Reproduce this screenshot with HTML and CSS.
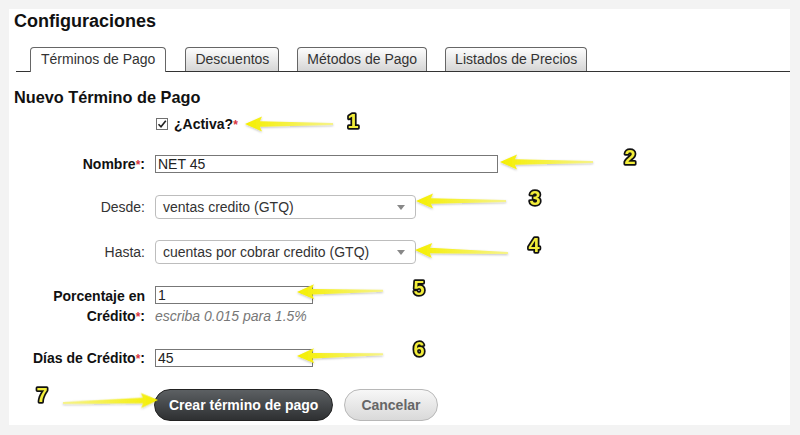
FILE: index.html
```html
<!DOCTYPE html>
<html lang="es">
<head>
    <meta charset="UTF-8">
    <title>Configuraciones</title>
    <link rel="stylesheet" href="styles.css">
</head>
<body>
    <div class="panel">
        <h1>Configuraciones</h1>
        <ul class="tabs">
            <li class="tab active">Términos de Pago</li>
            <li class="tab">Descuentos</li>
            <li class="tab">Métodos de Pago</li>
            <li class="tab">Listados de Precios</li>
        </ul>

        <h2>Nuevo Término de Pago</h2>

        <div class="row activa">
            <span></span>
            <label class="check-label">
                <span class="check"><svg width="10" height="10" viewBox="0 0 10 10"><path d="M1.5 5.2 L4 7.8 L8.8 1.8" fill="none" stroke="#222" stroke-width="1.6"/></svg></span>
                <span>¿Activa?<span class="req">*</span></span>
            </label>
        </div>

        <div class="row">
            <label class="label">Nombre<span class="req">*</span>:</label>
            <input class="field wide" type="text" value="NET 45">
        </div>

        <div class="row sel">
            <label class="label plain">Desde:</label>
            <div class="select"><span>ventas credito (GTQ)</span><span class="caret"></span></div>
        </div>

        <div class="row sel">
            <label class="label plain">Hasta:</label>
            <div class="select"><span>cuentas por cobrar credito (GTQ)</span><span class="caret"></span></div>
        </div>

        <div class="row two">
            <label class="label">Porcentaje en<br>Crédito<span class="req">*</span>:</label>
            <div>
                <input class="field short" type="text" value="1">
                <div class="hint">escriba 0.015 para 1.5%</div>
            </div>
        </div>

        <div class="row dias">
            <label class="label">Días de Crédito<span class="req">*</span>:</label>
            <input class="field short" type="text" value="45">
        </div>

        <div class="row actions">
            <span></span>
            <div class="buttons">
                <button class="btn primary">Crear término de pago</button>
                <button class="btn">Cancelar</button>
            </div>
        </div>
    </div>

    <svg class="notes" width="800" height="435" viewBox="0 0 800 435">
        <defs>
            <linearGradient id="fade" x1="0" x2="1">
                <stop offset="0" stop-color="#f5ef00"/>
                <stop offset="1" stop-color="#f6f38a"/>
            </linearGradient>
            <filter id="sh" x="-10%" y="-50%" width="120%" height="200%">
                <feDropShadow dx="0" dy="1" stdDeviation="1.2" flood-color="#000" flood-opacity=".25"/>
            </filter>
        </defs>
        <g fill="url(#fade)" filter="url(#sh)">
            <polygon transform="translate(245 124)" points="0,0 17,-7.5 15,-2.8 88,-1 88,1 15,2.8 17,7.5"/>
            <polygon transform="translate(500 162)" points="0,0 17,-7.5 15,-2.8 93,-1 93,1 15,2.8 17,7.5"/>
            <polygon transform="translate(416 201)" points="0,0 17,-7.5 15,-2.8 90,-1 90,1 15,2.8 17,7.5"/>
            <polygon transform="translate(415 250) rotate(1.8)" points="0,0 17,-7.5 15,-2.8 93,-1 93,1 15,2.8 17,7.5"/>
            <polygon transform="translate(297 292) rotate(-0.8)" points="0,0 17,-7.5 15,-2.8 86,-1 86,1 15,2.8 17,7.5"/>
            <polygon transform="translate(297 356) rotate(-1.2)" points="0,0 17,-7.5 15,-2.8 86,-1 86,1 15,2.8 17,7.5"/>
            <polygon transform="translate(158 400) rotate(178.2)" points="0,0 17,-7.5 15,-2.8 95,-1 95,1 15,2.8 17,7.5"/>
        </g>
        <g class="num">
            <text x="353" y="128">1</text>
            <text x="630" y="164">2</text>
            <text x="535" y="205">3</text>
            <text x="534" y="252">4</text>
            <text x="419" y="295">5</text>
            <text x="419" y="356">6</text>
            <text x="42" y="402">7</text>
        </g>
    </svg>
</body>
</html>
```

FILE: styles.css
```css
body {
    margin: 0;
    background: #f3f3f3;
    font-family: "Liberation Sans", Arial, sans-serif;
    color: #222;
    position: relative;
    height: 435px;
    overflow: hidden;
}
.panel {
    margin: 9px 0 0 9px;
    width: 781px;
    height: 416px;
    box-sizing: border-box;
    padding: 2px 5px 0;
    background: #fff;
}
h1 {
    margin: 0;
    font-size: 18px;
    line-height: 20px;
    color: #111;
}
.tabs {
    list-style: none;
    display: flex;
    margin: 16px -5px 0 2px;
    padding: 0 0 0 14px;
    border-bottom: 1px solid #333;
}
.tab {
    height: 24px;
    box-sizing: border-box;
    padding: 0 9px;
    margin-right: 18px;
    border: 1px solid #666;
    border-bottom: none;
    border-radius: 4px 4px 0 0;
    font-size: 14px;
    line-height: 22px;
    color: #333;
    background: linear-gradient(#fdfdfd, #d5d5d5);
}
.tab.active {
    height: 25px;
    margin-bottom: -1px;
    margin-right: 19px;
    padding: 0 10px;
    background: #fff;
}
h2 {
    margin: 15px 0 0;
    font-size: 16.3px;
    line-height: 20px;
    color: #111;
}
.row {
    display: grid;
    grid-template-columns: 131px auto;
    column-gap: 10px;
    align-items: center;
    justify-items: start;
    margin-top: 21px;
}
.row.activa { margin-top: 7px; height: 20px; }
.row.sel { margin-top: 22px; }
.row.sel + .row.sel { margin-top: 21px; }
.row.two { margin-top: 22px; align-items: start; }
.row.dias { margin-top: 23px; }
.row.actions { margin-top: 22px; }
.label {
    justify-self: end;
    text-align: right;
    font-size: 14px;
    line-height: 18px;
    font-weight: bold;
    color: #111;
}
.label.plain { font-weight: normal; color: #333; }
.row.two .label { line-height: 20px; }
.req {
    color: #d9363e;
    font-size: 12px;
    line-height: 0;
}
.check-label {
    display: flex;
    align-items: center;
    gap: 6px;
    font-size: 14px;
    font-weight: bold;
    color: #111;
    margin-left: 1px;
}
.check {
    width: 12px;
    height: 12px;
    box-sizing: border-box;
    border: 1px solid #707070;
    display: flex;
    align-items: center;
    justify-content: center;
}
.field {
    display: block;
    height: 18px;
    box-sizing: border-box;
    border: 1px solid #777;
    padding: 0 2px;
    margin: 0;
    font-family: inherit;
    font-size: 14px;
    color: #222;
    outline: none;
}
.field.wide { width: 343px; }
.field.short { width: 158px; }
.select {
    width: 261px;
    height: 24px;
    box-sizing: border-box;
    border: 1px solid #bdbdbd;
    border-radius: 4px;
    display: flex;
    align-items: center;
    justify-content: space-between;
    padding: 0 10px 0 7px;
    font-size: 14px;
    color: #333;
}
.caret {
    border-left: 4px solid transparent;
    border-right: 4px solid transparent;
    border-top: 5px solid #888;
}
.hint {
    margin-top: 2px;
    font-size: 14px;
    line-height: 20px;
    font-style: italic;
    color: #777;
}
.buttons {
    display: flex;
    gap: 11px;
    margin-left: -1px;
}
.btn {
    height: 32px;
    padding: 0 16px;
    border-radius: 16px;
    border: 1px solid #b8b8b8;
    background: linear-gradient(#f7f7f7, #d9d9d9);
    font-family: inherit;
    font-size: 14px;
    font-weight: bold;
    color: #666;
}
.btn.primary {
    padding: 0 14px;
    border-color: #222;
    background: linear-gradient(#5c6063, #2e3032);
    color: #fff;
}
.notes {
    position: absolute;
    top: 0;
    left: 0;
    pointer-events: none;
}
.num text {
    font-family: "Liberation Sans", Arial, sans-serif;
    font-weight: bold;
    font-size: 20px;
    fill: #f3ee3a;
    stroke: #111;
    stroke-width: 3.5px;
    stroke-linejoin: round;
    paint-order: stroke;
    text-anchor: middle;
}
```
